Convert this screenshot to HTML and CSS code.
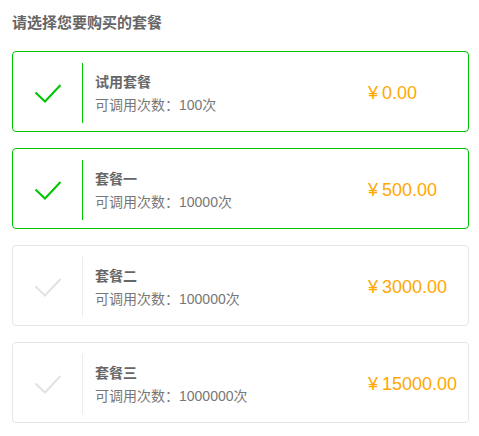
FILE: index.html
```html
<!DOCTYPE html>
<html lang="zh-CN">
<head>
  <meta charset="UTF-8" />
  <meta name="viewport" content="width=device-width, initial-scale=1.0"/>
  <title>选择套餐</title>
  <link rel="stylesheet" href="styles.css">
</head>
<body>
  <div class="package-page">
    <h2 class="page-title">请选择您要购买的套餐</h2>

    <div class="package-list">
      <div class="package active">
        <div class="package-check">
          <svg width="28" height="19" viewBox="0 0 28 19"><path d="M1.5 8.5 L11 17.5 L26.5 1" fill="none" stroke="currentColor" stroke-width="2"/></svg>
        </div>
        <div class="package-info">
          <div class="package-name">试用套餐</div>
          <div class="package-count">可调用次数：100次</div>
        </div>
        <div class="package-price"><span class="yen">¥</span>0.00</div>
      </div>

      <div class="package active">
        <div class="package-check">
          <svg width="28" height="19" viewBox="0 0 28 19"><path d="M1.5 8.5 L11 17.5 L26.5 1" fill="none" stroke="currentColor" stroke-width="2"/></svg>
        </div>
        <div class="package-info">
          <div class="package-name">套餐一</div>
          <div class="package-count">可调用次数：10000次</div>
        </div>
        <div class="package-price"><span class="yen">¥</span>500.00</div>
      </div>

      <div class="package">
        <div class="package-check">
          <svg width="28" height="19" viewBox="0 0 28 19"><path d="M1.5 8.5 L11 17.5 L26.5 1" fill="none" stroke="currentColor" stroke-width="2"/></svg>
        </div>
        <div class="package-info">
          <div class="package-name">套餐二</div>
          <div class="package-count">可调用次数：100000次</div>
        </div>
        <div class="package-price"><span class="yen">¥</span>3000.00</div>
      </div>

      <div class="package">
        <div class="package-check">
          <svg width="28" height="19" viewBox="0 0 28 19"><path d="M1.5 8.5 L11 17.5 L26.5 1" fill="none" stroke="currentColor" stroke-width="2"/></svg>
        </div>
        <div class="package-info">
          <div class="package-name">套餐三</div>
          <div class="package-count">可调用次数：1000000次</div>
        </div>
        <div class="package-price"><span class="yen">¥</span>15000.00</div>
      </div>
    </div>
  </div>
</body>
</html>
```

FILE: styles.css
```css
body {
  margin: 0;
  background: #fff;
  font-family: "Liberation Sans", "Noto Sans CJK SC", sans-serif;
  font-size: 14px;
  color: #666;
}
.package-page {
  padding: 13px 10px 0 12px;
}
.page-title {
  margin: 0 0 18px;
  font-size: 15px;
  line-height: 20px;
  font-weight: bold;
  color: #666;
}
.package-list {
  display: flex;
  flex-direction: column;
  gap: 16px;
}
.package {
  display: flex;
  align-items: center;
  height: 81px;
  box-sizing: border-box;
  padding: 11px 0 8px;
  border: 1px solid #e6e6e6;
  border-radius: 4px;
  background: #fff;
}
.package.active {
  border-color: #00c500;
}
.package-check {
  display: flex;
  align-items: center;
  justify-content: center;
  width: 69px;
  height: 60px;
  border-right: 1px solid #ececec;
  color: #e2e2e2;
}
.package.active .package-check {
  border-right-color: #00c500;
  color: #00c500;
}
.package-check svg {
  display: block;
  margin-top: 1px;
}
.package-info {
  flex: 1;
  padding-left: 12px;
}
.package-name {
  font-size: 14px;
  line-height: 20px;
  font-weight: bold;
  color: #666;
}
.package-count {
  margin-top: 3px;
  font-size: 14px;
  line-height: 20px;
  color: #777;
}
.package-price {
  width: 100px;
  font-size: 18px;
  line-height: 24px;
  color: #ffa800;
}
.package-price .yen {
  margin-right: 4px;
}
```
